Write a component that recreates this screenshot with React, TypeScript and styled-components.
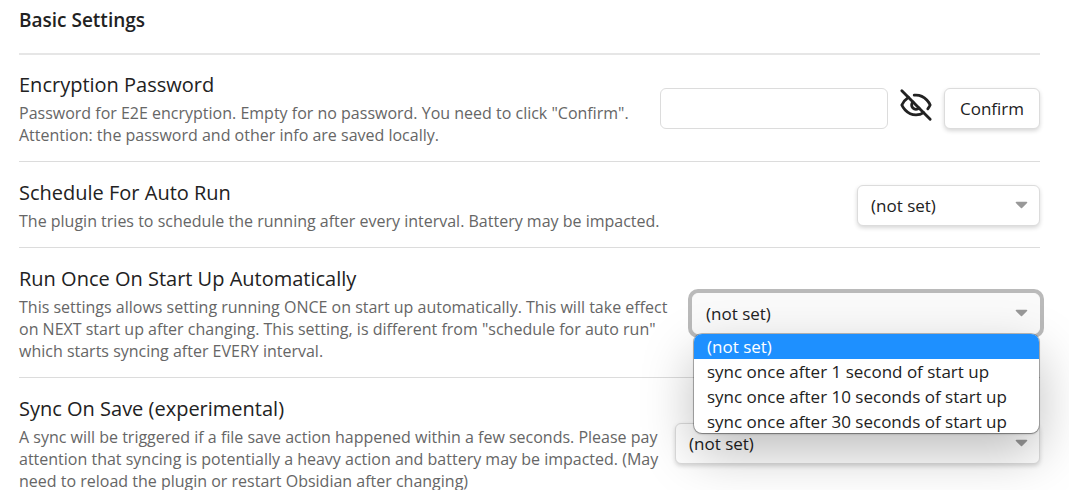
import React, { useId, useState } from "react";
import styled, { createGlobalStyle, css } from "styled-components";

const GlobalStyle = createGlobalStyle`
  *, *::before, *::after {
    box-sizing: border-box;
  }
  html {
    scrollbar-width: none;
  }
  body {
    margin: 0;
    background: #fff;
    color: #222;
    font-family: "Open Sans", "Noto Sans", sans-serif;
    font-size: 17px;
  }
`;

const Page = styled.main`
  padding: 6px 29px 0 19px;
`;

const SectionTitle = styled.h2`
  margin: 0;
  padding-bottom: 19px;
  font-size: 19px;
  line-height: 28px;
  font-weight: 600;
`;

const SettingItem = styled.section`
  display: flex;
  align-items: center;
  gap: 12px;
  padding: 17px 0 15px;
  border-top: 1px solid #dcdcdc;
`;

const FirstSettingItem = styled(SettingItem)`
  border-top: 2px solid #e6e6e6;
  padding-top: 16px;
`;

const Info = styled.div`
  flex: 1 1 auto;
  min-width: 0;
`;

const Name = styled.label`
  display: block;
  font-size: 20px;
  line-height: 28px;
`;

const Description = styled.p`
  margin: 3px 0 0;
  font-size: 16px;
  line-height: 22px;
  color: #666;
`;

const Control = styled.div`
  display: flex;
  flex: none;
  align-items: flex-start;
  gap: 11px;
`;

const fieldShape = css`
  height: 41px;
  border: 1px solid #dcdcdc;
  border-radius: 6px;
  background: #fff;
  color: #222;
  font-family: inherit;
  font-size: 17px;
`;

const PasswordInput = styled.input`
  ${fieldShape}
  width: 228px;
  padding: 0 12px;
  outline: none;
`;

const ConfirmButton = styled.button`
  ${fieldShape}
  width: 96px;
  padding: 0;
  box-shadow: 0 2px 4px rgba(0, 0, 0, 0.16);
`;

const IconButton = styled.button`
  display: flex;
  width: 34px;
  height: 34px;
  padding: 0;
  border: 0;
  background: none;
  color: #222;
`;

const SelectWrap = styled.div<{ $width: number }>`
  position: relative;
  width: ${(p) => p.$width}px;
`;

const Dropdown = styled.select<{ $open?: boolean }>`
  ${fieldShape}
  display: block;
  width: 100%;
  padding: 0 36px 0 13px;
  appearance: none;
  outline: none;
  box-shadow: 0 2px 4px rgba(0, 0, 0, 0.16);
  ${(p) =>
    p.$open &&
    css`
      border-color: #fafafa;
      background: #fafafa;
      box-shadow: 0 0 0 4px #bababa;
    `}
`;

const Arrow = styled.svg`
  position: absolute;
  top: 16px;
  right: 12px;
  width: 13px;
  height: 8px;
  pointer-events: none;
`;

const Menu = styled.ul`
  position: absolute;
  z-index: 1;
  top: 41px;
  left: 2px;
  right: 1px;
  height: 99px;
  margin: 0;
  padding: 0;
  overflow: hidden;
  list-style: none;
  border-radius: 8px;
  background: #fff;
  box-shadow: 0 0 0 1px rgba(0, 0, 0, 0.25), 0 1px 2px rgba(0, 0, 0, 0.3),
    0 20px 52px rgba(0, 0, 0, 0.26);
`;

const MenuOption = styled.li<{ $active: boolean }>`
  padding: 0 13px;
  line-height: 25px;
  white-space: nowrap;
  background: ${(p) => (p.$active ? "#1e90ff" : "transparent")};
  color: ${(p) => (p.$active ? "#fff" : "#222")};
`;

const NOT_SET = "(not set)";
const START_UP_OPTIONS = [
  NOT_SET,
  "sync once after 1 second of start up",
  "sync once after 10 seconds of start up",
  "sync once after 30 seconds of start up",
];

function EyeOff() {
  return (
    <svg
      width="34"
      height="34"
      viewBox="0 0 24 24"
      fill="none"
      stroke="currentColor"
      strokeWidth="2"
      strokeLinecap="round"
      strokeLinejoin="round"
    >
      <path d="M9.88 9.88a3 3 0 1 0 4.24 4.24" />
      <path d="M10.73 5.08A10.43 10.43 0 0 1 12 5c7 0 10 7 10 7a13.16 13.16 0 0 1-1.67 2.68" />
      <path d="M6.61 6.61A13.526 13.526 0 0 0 2 12s3 7 10 7a9.74 9.74 0 0 0 5.39-1.61" />
      <line x1="2" y1="2" x2="22" y2="22" />
    </svg>
  );
}

interface SelectSettingProps {
  name: string;
  description: React.ReactNode;
  width: number;
  options?: string[];
  open?: boolean;
}

function SelectSetting({
  name,
  description,
  width,
  options = [NOT_SET],
  open = false,
}: SelectSettingProps) {
  const id = useId();
  const [value, setValue] = useState(options[0]);
  return (
    <SettingItem>
      <Info>
        <Name htmlFor={id}>{name}</Name>
        <Description>{description}</Description>
      </Info>
      <Control>
        <SelectWrap $width={width}>
          <Dropdown
            id={id}
            value={value}
            $open={open}
            onChange={(e) => setValue(e.target.value)}
          >
            {options.map((o) => (
              <option key={o}>{o}</option>
            ))}
          </Dropdown>
          <Arrow viewBox="0 0 13 8" aria-hidden="true">
            <path
              d="M1.5 1.5h10L6.5 6.5z"
              fill="#999"
              stroke="#999"
              strokeWidth="1.6"
              strokeLinejoin="round"
            />
          </Arrow>
          {open && (
            <Menu role="listbox" aria-label={name}>
              {options.map((o) => (
                <MenuOption
                  key={o}
                  role="option"
                  aria-selected={o === value}
                  $active={o === value}
                  onClick={() => setValue(o)}
                >
                  {o}
                </MenuOption>
              ))}
            </Menu>
          )}
        </SelectWrap>
      </Control>
    </SettingItem>
  );
}

export default function App() {
  const [visible, setVisible] = useState(false);
  return (
    <>
      <GlobalStyle />
      <Page>
        <SectionTitle>Basic Settings</SectionTitle>
        <FirstSettingItem>
          <Info>
            <Name htmlFor="password">Encryption Password</Name>
            <Description>
              Password for E2E encryption. Empty for no password. You need to
              click "Confirm".
              <br />
              Attention: the password and other info are saved locally.
            </Description>
          </Info>
          <Control>
            <PasswordInput
              id="password"
              type={visible ? "text" : "password"}
            />
            <IconButton
              type="button"
              aria-label="Toggle password visibility"
              onClick={() => setVisible(!visible)}
            >
              <EyeOff />
            </IconButton>
            <ConfirmButton type="button">Confirm</ConfirmButton>
          </Control>
        </FirstSettingItem>
        <SelectSetting
          name="Schedule For Auto Run"
          description="The plugin tries to schedule the running after every interval. Battery may be impacted."
          width={183}
        />
        <SelectSetting
          name="Run Once On Start Up Automatically"
          description={
            'This settings allows setting running ONCE on start up automatically. This will take effect on NEXT start up after changing. This setting, is different from "schedule for auto run" which starts syncing after EVERY interval.'
          }
          width={348}
          options={START_UP_OPTIONS}
          open
        />
        <SelectSetting
          name="Sync On Save (experimental)"
          description="A sync will be triggered if a file save action happened within a few seconds. Please pay attention that syncing is potentially a heavy action and battery may be impacted. (May need to reload the plugin or restart Obsidian after changing)"
          width={365}
        />
      </Page>
    </>
  );
}
